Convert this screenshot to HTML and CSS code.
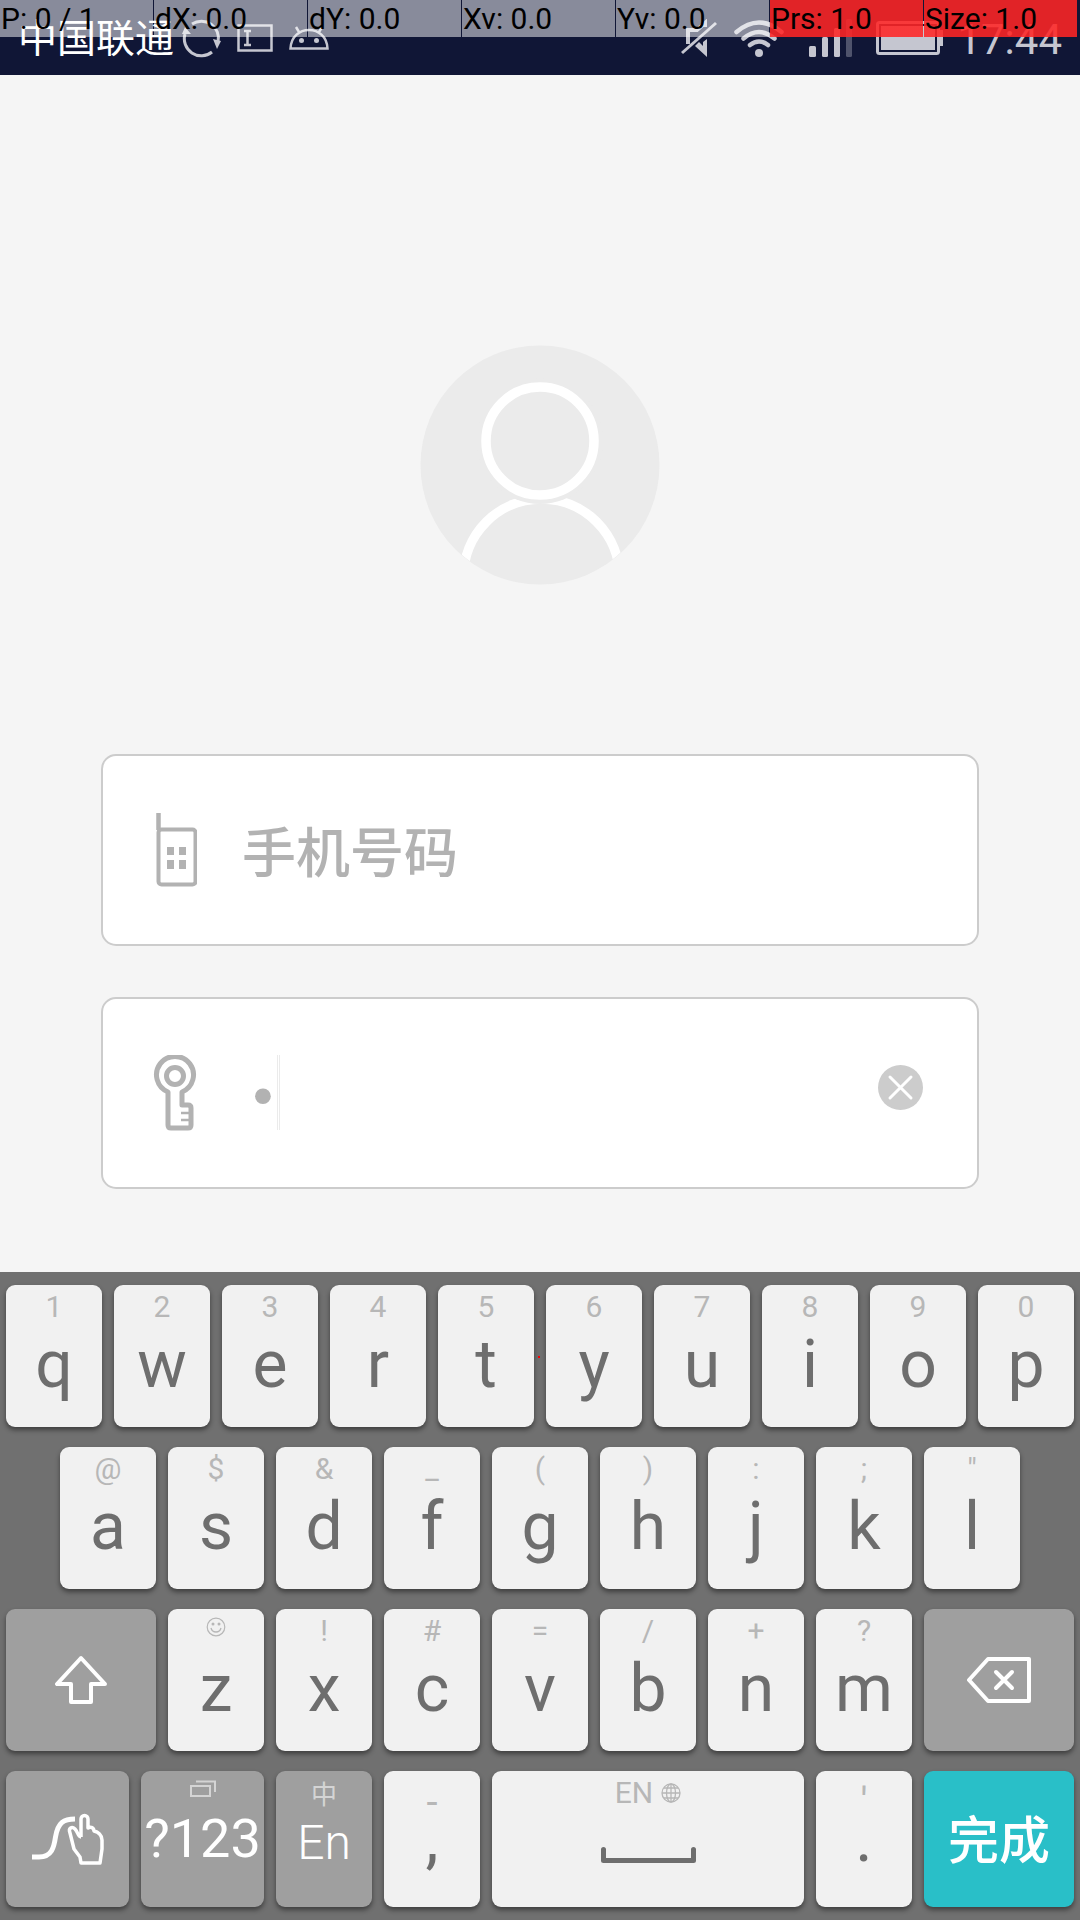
FILE: index.html
```html
<!DOCTYPE html>
<html lang="zh-CN">
<head>
<meta charset="utf-8">
<meta name="viewport" content="width=device-width, initial-scale=1">
<title>登录</title>
<link rel="stylesheet" href="styles.css">
</head>
<body>
<header class="status">
  <div class="status-group">
    <span class="carrier">中国联通</span>
    <svg class="ic-sync" width="40" height="40" viewBox="0 0 40 40"><g fill="none" stroke="currentColor" stroke-width="3"><path d="M3 16A17 17 0 0 0 30 34"/><path d="M10 6A17 17 0 0 1 36 24"/></g><path d="M0 16L3 9l6 7zM31 21l8 2-4 8z" fill="currentColor"/></svg>
    <svg class="ic-input" width="36" height="28" viewBox="0 0 36 28"><path d="M1.500 1.500H34.500V26.500H1.500ZM7 7h7M7 21h7M10.500 7V21" fill="none" stroke="currentColor" stroke-width="2.500"/></svg>
    <svg width="40" height="24" viewBox="0 0 40 24"><path d="M1.500 22.500C2 10 11 4 20 4S38 10 38.500 22.500ZM10 6L7 1M30 6L33 1" fill="none" stroke="currentColor" stroke-width="2.500"/><circle cx="12.500" cy="14.500" r="2.500" fill="currentColor"/><circle cx="27.500" cy="14.500" r="2.500" fill="currentColor"/></svg>
  </div>
  <div class="status-group status-right">
    <svg width="36" height="38" viewBox="0 0 36 38"><g fill="none" stroke="currentColor"><path d="M1 34L35 4" stroke-width="3"/><path d="M7 25V11h9L24 4V8" stroke-width="4"/></g><path d="M26 20V38L14 27l4-4 4 4V23z" fill="currentColor"/></svg>
    <svg class="ic-wifi" width="50" height="38" viewBox="0 0 50 38"><g fill="none" stroke="currentColor" stroke-width="4.500" stroke-linecap="round"><path d="M2.500 13Q25-6 47.500 13"/><path d="M9.500 19.500Q25 6.500 40.500 19.500"/><path d="M16 26Q25 19 34 26"/></g><circle cx="25" cy="34" r="4" fill="currentColor"/></svg>
    <svg class="ic-signal" width="44" height="38" viewBox="0 0 44 38" fill="currentColor"><rect y="27" width="7" height="11" rx="1.500"/><rect x="13" y="18" width="6" height="20" rx="1.500"/><rect x="25" y="9" width="6" height="29" rx="1.500"/><rect x="37" width="6" height="38" rx="1.500" opacity=".35"/></svg>
    <svg class="ic-battery" width="67" height="34" viewBox="0 0 67 34"><rect x="1.500" y="1.500" width="61" height="31" rx="2" fill="none" stroke="currentColor" stroke-width="3"/><path d="M5 5H59V29H5ZM63 9h4V25h-4z" fill="currentColor"/></svg>
    <time class="clock">17:44</time>
  </div>
  <div class="pointer-info">
    <span>P: 0 / 1</span><span>dX: 0.0</span><span>dY: 0.0</span><span>Xv: 0.0</span><span>Yv: 0.0</span><span class="hot">Prs: 1.0</span><span class="hot">Size: 1.0</span>
  </div>
</header>

<main class="login">
  <svg class="avatar" width="240" height="240" viewBox="0 0 240 240" role="img" aria-label="头像">
    <clipPath id="disc"><circle cx="120" cy="120" r="119"/></clipPath>
    <circle cx="120" cy="120" r="119.500" fill="#ebebeb"/>
    <circle cx="121.500" cy="232" r="78" fill="none" stroke="#fff" stroke-width="9.500" clip-path="url(#disc)"/>
    <circle cx="120" cy="96" r="63" fill="#ebebeb"/>
    <circle cx="120" cy="96" r="54" fill="none" stroke="#fff" stroke-width="9.500"/>
  </svg>
  <form class="form">
    <label class="field">
      <svg class="field-icon" width="44" height="76" viewBox="0 0 44 76"><path d="M5.500 1V18" fill="none" stroke="currentColor" stroke-width="4.500"/><rect x="5.500" y="17.500" width="37" height="55" rx="3" fill="none" stroke="currentColor" stroke-width="4"/><path d="M14 35h7v8h-7zM26 35h7v8h-7zM14 48h7v9h-7zM26 48h7v9h-7z" fill="currentColor"/></svg>
      <input class="field-input" type="tel" placeholder="手机号码" aria-label="手机号码">
    </label>
    <div class="field">
      <svg class="field-icon" width="44" height="76" viewBox="0 0 44 76"><g fill="none" stroke="currentColor" stroke-width="5"><path d="M15 37A18.500 18.500 0 1 1 29 37V50H35Q38 50 38 53V70Q38 73 35 73H18Q15 73 15 70Z" stroke-linejoin="round"/><circle cx="22" cy="21" r="8.500"/><path d="M28 58h8M28 65h8" stroke-width="2.500"/></g></svg>
      <span class="secret">
        <input class="field-input" type="password" value="1" aria-label="密码">
        <span class="caret"></span>
      </span>
      <button class="clear" type="button" aria-label="清除"><svg width="45" height="45" viewBox="0 0 45 45"><circle cx="22.500" cy="22.500" r="22.500" fill="#ccc"/><path d="M12 12L33 33M33 12L12 33" stroke="#fff" stroke-width="3" stroke-linecap="round"/></svg></button>
    </div>
  </form>
</main>

<section class="keyboard" aria-label="键盘">
  <div class="row">
    <div class="cell"><button class="key"><span class="hint">1</span><span class="label">q</span></button></div>
    <div class="cell"><button class="key"><span class="hint">2</span><span class="label">w</span></button></div>
    <div class="cell"><button class="key"><span class="hint">3</span><span class="label">e</span></button></div>
    <div class="cell"><button class="key"><span class="hint">4</span><span class="label">r</span></button></div>
    <div class="cell"><button class="key"><span class="hint">5</span><span class="label">t</span></button></div>
    <div class="cell"><button class="key"><span class="hint">6</span><span class="label">y</span></button></div>
    <div class="cell"><button class="key"><span class="hint">7</span><span class="label">u</span></button></div>
    <div class="cell"><button class="key"><span class="hint">8</span><span class="label">i</span></button></div>
    <div class="cell"><button class="key"><span class="hint">9</span><span class="label">o</span></button></div>
    <div class="cell"><button class="key"><span class="hint">0</span><span class="label">p</span></button></div>
  </div>
  <div class="row row-inset">
    <div class="cell"><button class="key"><span class="hint">@</span><span class="label">a</span></button></div>
    <div class="cell"><button class="key"><span class="hint">$</span><span class="label">s</span></button></div>
    <div class="cell"><button class="key"><span class="hint">&amp;</span><span class="label">d</span></button></div>
    <div class="cell"><button class="key"><span class="hint">_</span><span class="label">f</span></button></div>
    <div class="cell"><button class="key"><span class="hint">(</span><span class="label">g</span></button></div>
    <div class="cell"><button class="key"><span class="hint">)</span><span class="label">h</span></button></div>
    <div class="cell"><button class="key"><span class="hint">:</span><span class="label">j</span></button></div>
    <div class="cell"><button class="key"><span class="hint">;</span><span class="label">k</span></button></div>
    <div class="cell"><button class="key"><span class="hint">"</span><span class="label">l</span></button></div>
  </div>
  <div class="row">
    <div class="cell cell-wide"><button class="key key-dark key-center" aria-label="Shift"><svg width="52" height="50" viewBox="0 0 52 50"><path d="M26 3L2 29H16V47H36V29H50Z" fill="none" stroke="#fff" stroke-width="4" stroke-linejoin="round"/></svg></button></div>
    <div class="cell"><button class="key"><span class="hint hint-icon"><svg width="20" height="20" viewBox="0 0 20 20"><circle cx="10" cy="10" r="8.800" fill="none" stroke="currentColor" stroke-width="1.200"/><circle cx="7" cy="7" r="1.500" fill="currentColor"/><circle cx="13" cy="7" r="1.500" fill="currentColor"/><path d="M5 11Q6 15 10 15T15 11" fill="none" stroke="currentColor" stroke-width="1.300"/></svg></span><span class="label">z</span></button></div>
    <div class="cell"><button class="key"><span class="hint">!</span><span class="label">x</span></button></div>
    <div class="cell"><button class="key"><span class="hint">#</span><span class="label">c</span></button></div>
    <div class="cell"><button class="key"><span class="hint">=</span><span class="label">v</span></button></div>
    <div class="cell"><button class="key"><span class="hint">/</span><span class="label">b</span></button></div>
    <div class="cell"><button class="key"><span class="hint">+</span><span class="label">n</span></button></div>
    <div class="cell"><button class="key"><span class="hint">?</span><span class="label">m</span></button></div>
    <div class="cell cell-wide"><button class="key key-dark key-center" aria-label="Backspace"><svg width="64" height="46" viewBox="0 0 64 46"><path d="M2 23L21 2H62V44H21Z" fill="none" stroke="#fff" stroke-width="4" stroke-linejoin="round"/><path d="M29 15L45 31M45 15L29 31" stroke="#fff" stroke-width="4" stroke-linecap="round"/></svg></button></div>
  </div>
  <div class="row row-bottom">
    <div class="cell cell-medium"><button class="key key-dark key-center" aria-label="Gesture"><svg width="72" height="52" viewBox="0 0 72 52"><path d="M0 44H7C20 44 22 34 23.500 24C26 9 32 6 43 6" fill="none" stroke="#fff" stroke-width="5"/><path d="M49 24V6a3.500 3.500 0 0 1 7 0V15c3-2 6 0 6 3c4 1 8 4 8 9V36L68 50H49L48 44L42 36L38 20c-2-5 2-7 5-4c3 3 3 8 6 8" fill="none" stroke="#fff" stroke-width="3.500" stroke-linejoin="round"/></svg></button></div>
    <div class="cell cell-medium"><button class="key key-dark"><span class="hint hint-icon"><svg width="26" height="18" viewBox="0 0 26 18"><path d="M1 6H20V16H1ZM6 1.500H25V12" fill="none" stroke="currentColor" stroke-width="2"/></svg></span><span class="label label-sym">?123</span></button></div>
    <div class="cell"><button class="key key-dark"><span class="hint hint-cjk">中</span><span class="label label-lang">En</span></button></div>
    <div class="cell"><button class="key"><span class="hint hint-big">-</span><span class="label">,</span></button></div>
    <div class="cell cell-space"><button class="key" aria-label="Space"><span class="hint hint-lang">EN<svg width="20" height="20" viewBox="0 0 20 20"><g fill="none" stroke="currentColor" stroke-width="1.300"><circle cx="10" cy="10" r="9"/><ellipse cx="10" cy="10" rx="4.500" ry="9"/><path d="M10 1V19M1 10H19M3 5H17M3 15H17"/></g></svg></span><span class="label label-space"><svg width="95" height="16" viewBox="0 0 95 16"><path d="M2.500 2.500V13.500H92.500V2.500" fill="none" stroke="currentColor" stroke-width="5" stroke-linecap="round" stroke-linejoin="round"/></svg></span></button></div>
    <div class="cell"><button class="key"><span class="hint hint-big">'</span><span class="label">.</span></button></div>
    <div class="cell cell-wide"><button class="key key-done key-center">完成</button></div>
  </div>
  <span class="touch-point"></span>
</section>
</body>
</html>
```
FILE: styles.css
```css
* {
  box-sizing: border-box;
}

body {
  margin: 0;
  min-height: 100vh;
  display: flex;
  flex-direction: column;
  background: #f5f5f5;
  font-family: Roboto, "Noto Sans CJK SC", sans-serif;
}

svg {
  display: block;
  flex: none;
}

button,
input {
  margin: 0;
  padding: 0;
  border: 0;
  background: none;
  font-family: inherit;
  color: inherit;
}

/* Status bar */
.status {
  position: relative;
  display: flex;
  justify-content: space-between;
  height: 75px;
  padding: 0 18px;
  background: #101636;
  color: #c5c6d0;
}

.status-group {
  display: flex;
  align-items: center;
}

.carrier {
  margin-right: 8px;
  padding-top: 4px;
  font-size: 39px;
  line-height: 75px;
  color: #fff;
}

.ic-sync {
  margin-right: 15px;
}

.ic-input {
  margin-right: 16px;
}

.ic-wifi {
  margin-left: 17px;
}

.ic-signal {
  margin-left: 25px;
}

.ic-battery {
  margin-left: 23px;
}

.clock {
  margin-left: 14px;
  padding-top: 4px;
  font-size: 42px;
  line-height: 75px;
}

.pointer-info {
  position: absolute;
  inset: 0 0 auto;
  display: flex;
  gap: 1px;
  padding-right: 3px;
  color: #000;
  font-size: 30px;
  line-height: 37px;
}

.pointer-info span {
  flex: 1;
  padding-left: 1px;
  white-space: nowrap;
  background: rgba(255, 255, 255, .5);
}

.pointer-info .hot {
  background: linear-gradient(rgba(255, 0, 0, .75), rgba(255, 0, 0, .75)), rgba(255, 255, 255, .5);
}

/* Login form */
.login {
  flex: 1;
  display: flex;
  flex-direction: column;
  align-items: center;
  padding: 270px 101px 83px;
}

.form {
  display: flex;
  flex-direction: column;
  gap: 51px;
  width: 100%;
  margin-top: 169px;
}

.field {
  display: flex;
  align-items: center;
  height: 192px;
  padding: 0 54px 0 50px;
  border: 2px solid #ccc;
  border-radius: 15px;
  background: #fff;
  color: #b2b2b2;
}

.field-icon {
  margin-right: 45px;
}

.field-input {
  flex: 1;
  min-width: 0;
  width: 100%;
  height: 76px;
  padding-top: 8px;
  font-size: 54px;
  font-weight: 500;
  outline: 0;
}

.field-input::placeholder {
  color: #b2b2b2;
}

.field-input[type="password"] {
  padding-left: 5px;
  font-family: "DejaVu Sans", sans-serif;
  font-weight: 400;
}

.secret {
  position: relative;
  display: flex;
  flex: 1;
}

.caret {
  position: absolute;
  left: 35px;
  top: 0;
  width: 3px;
  height: 75px;
  border: solid #ebebeb;
  border-width: 0 1px;
}

.clear {
  margin-bottom: 12px;
}

/* Keyboard */
.keyboard {
  position: relative;
  display: flex;
  flex-direction: column;
  gap: 20px;
  padding: 13px 0;
  background: #707070;
}

.row {
  display: flex;
}

.row-inset {
  padding: 0 5%;
}

/* Every cell's share of the row includes its side padding */
.cell {
  flex: 1 0 10%;
  min-width: 0;
  padding: 0 6px;
}

.cell-medium {
  flex-basis: 12.5%;
}

.cell-wide {
  flex-basis: 15%;
}

.cell-space {
  flex-basis: 30%;
}

.key {
  display: flex;
  flex-direction: column;
  align-items: center;
  width: 100%;
  height: 142px;
  border-radius: 9px;
  background: #f1f1f1;
  box-shadow: 0 3px 5px rgba(0, 0, 0, .45);
  color: #6e6e6e;
}

.key-dark {
  background: #9f9f9f;
  color: #fff;
}

.key-done {
  padding-bottom: 4px;
  background: #29bfc8;
  color: #fff;
  font-size: 51px;
  font-weight: 500;
}

.key-center {
  justify-content: center;
}

.hint {
  height: 44px;
  font-size: 30px;
  line-height: 44px;
  color: #b7b7b7;
}

.key-dark .hint {
  color: #d4d4d4;
}

.hint-icon {
  display: flex;
  align-items: center;
  padding-bottom: 8px;
}

.hint-cjk {
  font-size: 26px;
  line-height: 48px;
}

.hint-big {
  font-size: 40px;
  line-height: 64px;
}

.hint-lang {
  display: flex;
  align-items: center;
  gap: 8px;
}

.label {
  font-size: 66px;
  line-height: 72px;
}

.row-bottom .key {
  height: 136px;
}

.row-bottom .label {
  line-height: 48px;
}

.row-bottom .label-sym {
  font-size: 54px;
}

.row-bottom .label-lang {
  font-size: 48px;
  font-weight: 300;
  line-height: 56px;
}

.label-space {
  display: flex;
  align-items: center;
  height: 80px;
}

.touch-point {
  position: absolute;
  left: 50%;
  top: 84px;
  width: 2px;
  height: 2px;
  margin-left: -2px;
  background: #f00;
}
```
